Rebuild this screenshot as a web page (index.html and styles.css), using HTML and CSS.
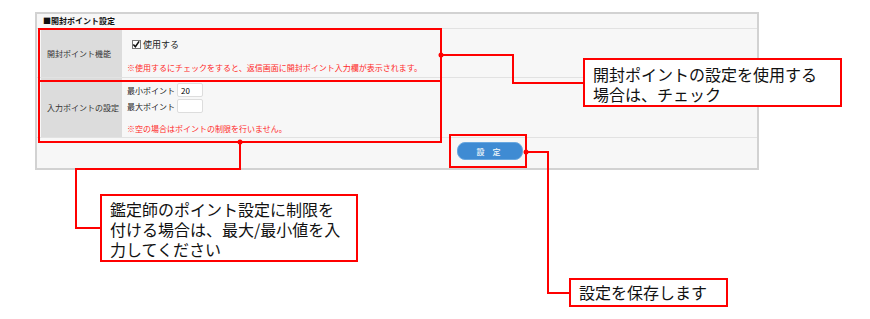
FILE: index.html
```html
<!DOCTYPE html>
<html lang="ja">
  <head>
    <meta charset="UTF-8" />
    <title>開封ポイント設定</title>
    <link rel="stylesheet" href="styles.css">
  </head>
  <body>
    <div class="panel">
      <div class="panel-title">■開封ポイント設定</div>

      <div class="row row-use">
        <div class="label">開封ポイント機能</div>
        <div class="value">
          <label class="check">
            <span class="box">
              <svg width="9" height="9" viewBox="0 0 9 9"><path d="M1.5 4.5 L3.8 7 L8 1" fill="none" stroke="#111" stroke-width="1.8"/></svg>
            </span>
            使用する
          </label>
          <p class="note">※使用するにチェックをすると、返信画面に開封ポイント入力欄が表示されます。</p>
        </div>
      </div>

      <div class="row row-limit">
        <div class="label">入力ポイントの設定</div>
        <div class="value">
          <div class="field">
            <span>最小ポイント</span>
            <input type="text" value="20" />
          </div>
          <div class="field">
            <span>最大ポイント</span>
            <input type="text" value="" />
          </div>
          <p class="note">※空の場合はポイントの制限を行いません。</p>
        </div>
      </div>

      <div class="button-row">
        <button id="btnSave">設 定</button>
      </div>
    </div>

    <!-- annotations -->
    <div class="frame frame-use"></div>
    <div class="frame frame-limit"></div>
    <div class="frame frame-save"></div>

    <svg class="connectors" width="870" height="319" viewBox="0 0 870 319">
      <polyline points="441,55 513,55 513,83 583,83" />
      <polyline points="240,142 240,169 76,169 76,228 100,228" />
      <polyline points="526,152 548,152 548,293 569,293" />
      <circle cx="441" cy="55" r="2.5" />
      <circle cx="240" cy="142" r="2.5" />
      <circle cx="526" cy="152" r="2.5" />
    </svg>

    <div class="callout callout-use">開封ポイントの設定を使用する<br>場合は、チェック</div>
    <div class="callout callout-limit">鑑定師のポイント設定に制限を<br>付ける場合は、最大/最小値を入<br>力してください</div>
    <div class="callout callout-save">設定を保存します</div>
  </body>
</html>
```

FILE: styles.css
```css
body {
  margin: 0;
  width: 870px;
  height: 319px;
  position: relative;
  background-color: white;
  font-family: "Noto Sans CJK JP", "Noto Sans", sans-serif;
  color: #222;
}

.panel {
  position: absolute;
  left: 35px;
  top: 12px;
  width: 724px;
  height: 158px;
  box-sizing: border-box;
  border: 2px solid #d2d2d2;
  background-color: #f7f7f7;
  display: flex;
  flex-direction: column;
}

.panel-title {
  height: 14px;
  padding-left: 6px;
  font-size: 8px;
  font-weight: bold;
  line-height: 14px;
  color: #111;
  border-bottom: 1px solid #e2e2e2;
}

.row {
  display: flex;
  padding-left: 4px;
  border-bottom: 1px solid #e2e2e2;
}

.row-use {
  height: 48px;
}

.row-limit {
  height: 59px;
}

.label {
  width: 81px;
  background-color: #dcdcdc;
  display: flex;
  align-items: center;
  padding-left: 6px;
  box-sizing: border-box;
  font-size: 8px;
  color: #333;
}

.value {
  padding-left: 5px;
  display: flex;
  flex-direction: column;
  font-size: 8px;
}

.check {
  display: flex;
  align-items: flex-end;
  gap: 2px;
  margin-top: 9px;
  margin-left: 5px;
  font-size: 9px;
  color: #222;
}

.box {
  width: 9px;
  height: 9px;
  border: 1px solid #777;
  background: white;
  box-sizing: border-box;
  display: flex;
  margin-bottom: 2px;
}

.box svg {
  margin: -1px 0 0 -1px;
}

.note {
  margin: 0;
  color: #ff2a2a;
  font-size: 8px;
  white-space: nowrap;
}

.row-use .note {
  margin-top: 11px;
}

.field {
  display: flex;
  align-items: center;
  gap: 2px;
  height: 16px;
}

.row-limit .field:first-child {
  margin-top: 4px;
}

.field span {
  white-space: nowrap;
}

.field input {
  width: 26px;
  height: 14px;
  box-sizing: border-box;
  border: 1px solid #ddd;
  border-radius: 2px;
  background: white;
  font-size: 8px;
  padding: 0 3px;
  font-family: inherit;
}

.row-limit .note {
  margin-top: 9px;
}

.button-row {
  display: flex;
  padding-top: 4px;
  padding-left: 420px;
}

#btnSave {
  width: 66px;
  height: 18px;
  border: 1px solid #6aa8e0;
  border-radius: 8px;
  background-color: #3f8bd3;
  color: #dce9f5;
  font-size: 8px;
  font-weight: bold;
  font-family: inherit;
  letter-spacing: 3px;
  padding: 0;
  cursor: pointer;
}

.frame {
  position: absolute;
  border: 2px solid #ff0000;
  box-sizing: border-box;
}

.frame-use {
  left: 38px;
  top: 28px;
  width: 404px;
  height: 54px;
}

.frame-limit {
  left: 38px;
  top: 80px;
  width: 404px;
  height: 63px;
}

.frame-save {
  left: 449px;
  top: 134px;
  width: 78px;
  height: 34px;
}

.connectors {
  position: absolute;
  left: 0;
  top: 0;
  pointer-events: none;
}

.connectors polyline {
  fill: none;
  stroke: #ff0000;
  stroke-width: 2;
}

.connectors circle {
  fill: #ff0000;
}

.callout {
  position: absolute;
  box-sizing: border-box;
  border: 2px solid #ff0000;
  background-color: white;
  color: #111;
  font-size: 16px;
  line-height: 20px;
  padding-left: 8px;
  white-space: nowrap;
}

.callout-use {
  left: 583px;
  top: 58px;
  width: 259px;
  height: 49px;
  padding-top: 4px;
}

.callout-limit {
  left: 100px;
  top: 194px;
  width: 258px;
  height: 68px;
  padding-top: 3px;
}

.callout-save {
  left: 569px;
  top: 278px;
  width: 159px;
  height: 29px;
  padding-top: 2px;
}
```
